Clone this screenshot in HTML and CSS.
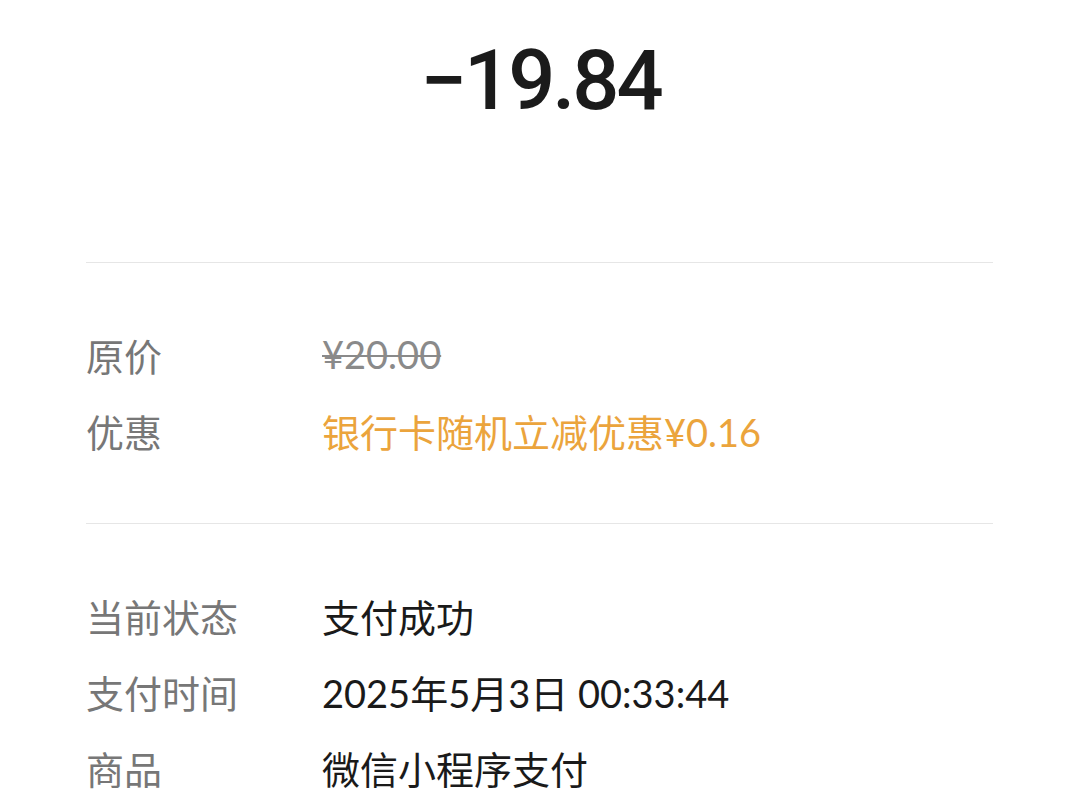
FILE: index.html
```html
<!DOCTYPE html>
<html lang="zh-CN">
<head>
<meta charset="utf-8">
<link rel="stylesheet" href="styles.css">
</head>
<body>
<div class="page">
  <div class="header">
    <div class="amount">−19.84</div>
  </div>
  <div class="section first">
    <div class="row"><div class="label">原价</div><div class="value strike">¥20.00</div></div>
    <div class="row"><div class="label">优惠</div><div class="value orange">银行卡随机立减优惠¥0.16</div></div>
  </div>
  <div class="section">
    <div class="row"><div class="label">当前状态</div><div class="value">支付成功</div></div>
    <div class="row"><div class="label">支付时间</div><div class="value">2025年5月3日 00:33:44</div></div>
    <div class="row"><div class="label">商品</div><div class="value">微信小程序支付</div></div>
  </div>
</div>
</body>
</html>
```
FILE: styles.css
```css
html, body {
  margin: 0;
  padding: 0;
  background: #ffffff;
}
body {
  font-family: "Lato", "Noto Sans CJK SC", sans-serif;
  color: #1a1a1a;
}
.page {
  margin: 0 87px 0 86px;
  height: 799px;
  overflow: hidden;
}
.header {
  display: flex;
  justify-content: center;
  align-items: flex-start;
  border-bottom: 1px solid #e6e6e6;
  box-sizing: border-box;
  height: 263px;
}
.amount {
  margin-top: 39px;
  margin-left: 2px;
  font-family: "Roboto", sans-serif;
  font-size: 83px;
  font-weight: 500;
  line-height: 1;
  letter-spacing: -3px;
  color: #1b1b1b;
}
.section {
  padding: 53px 0 55px;
}
.section.first {
  border-bottom: 1px solid #e6e6e6;
}
.row {
  display: flex;
  height: 76px;
  align-items: center;
  font-size: 38px;
}
.label {
  width: 236px;
  color: #777777;
}
.value {
  color: #1a1a1a;
}
.strike {
  color: #8a8a8a;
  text-decoration: line-through;
  text-decoration-thickness: 2px;
}
.orange {
  color: #eba43c;
}
```
